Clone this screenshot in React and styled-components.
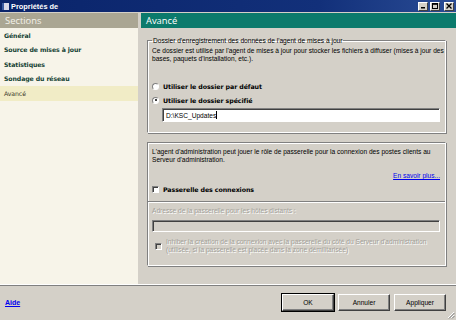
import React from 'react'
import styled, { createGlobalStyle, css } from 'styled-components'

const Colors = {
  FACE: '#d4d0c8',
  SHADOW: '#808080',
  DARK: '#404040',
  TEAL: '#0b7a6c',
  KHAKI: '#aaa693',
  CREAM: '#f7f4e9',
  SELECTED: '#f1ecc6',
  NAV: '#123f33',
  DISABLED: '#a29f98',
  LINK: '#0000ee',
}

const GlobalStyle = createGlobalStyle`
  html, body {
    margin: 0;
    padding: 0;
    background: ${Colors.FACE};
  }
  body {
    font-family: 'Liberation Sans', Arial, sans-serif;
    font-size: 6.6px;
    color: #000;
  }
`

const Window = styled.div`
  width: 456px;
  height: 320px;
  display: flex;
  flex-direction: column;
  background: ${Colors.FACE};
  overflow: hidden;
`

const TitleBar = styled.div`
  height: 12px;
  display: flex;
  align-items: center;
  padding: 0 2px;
  background: linear-gradient(90deg, #0a246a 0%, #12307a 70%, #2a4c95 100%);
  color: #fff;
  font-weight: bold;
  font-size: 7.4px;
  gap: 2px;
`

const TitleIcon = styled.div`
  width: 7px;
  height: 7px;
  background: #d8d8e8;
  border-left: 2px solid #3a5aa0;
  box-sizing: border-box;
`

const TitleText = styled.span`
  flex: 1;
`

const CaptionButton = styled.div`
  width: 10px;
  height: 9px;
  box-sizing: border-box;
  background: ${Colors.FACE};
  border: 1px solid;
  border-color: #fff ${Colors.DARK} ${Colors.DARK} #fff;
  display: flex;
  align-items: center;
  justify-content: center;
  margin-left: ${p => (p.$gap ? '2px' : '0')};
`

const Body = styled.div`
  flex: 1;
  display: flex;
  gap: 3px;
  padding-top: 1px;
  min-height: 0;
  border-bottom: 1px solid #fff;
  box-shadow: 0 1px 0 ${Colors.SHADOW};
`

const Sidebar = styled.div`
  flex: none;
  width: 138px;
  display: flex;
  flex-direction: column;
  background: ${Colors.CREAM};
`

const Header = styled.div`
  height: 15px;
  display: flex;
  align-items: center;
  padding-left: 5px;
  font-family: 'Open Sans', 'Liberation Sans', sans-serif;
  font-size: 9.4px;
  color: #fff;
  background: ${p => (p.$teal ? Colors.TEAL : Colors.KHAKI)};
  ${p =>
    !p.$teal &&
    css`
      color: #f4f2ea;
    `}
`

const NavList = styled.div`
  display: flex;
  flex-direction: column;
  padding-top: 0;
`

const NavItem = styled.div`
  height: 14.5px;
  display: flex;
  align-items: center;
  padding-left: 4px;
  font-family: 'DejaVu Sans', Verdana, sans-serif;
  font-size: 6.2px;
  letter-spacing: -0.1px;
  font-weight: ${p => (p.$active ? 'normal' : 'bold')};
  color: ${p => (p.$active ? '#3a3a2a' : Colors.NAV)};
  background: ${p => (p.$active ? Colors.SELECTED : 'transparent')};
`

const Main = styled.div`
  flex: 1;
  min-width: 0;
  display: flex;
  flex-direction: column;
`

const Content = styled.div`
  flex: 1;
  display: flex;
  flex-direction: column;
  gap: 9px;
  padding: 9px 10px 0 6px;
`

const GroupBox = styled.fieldset`
  margin: 0;
  min-width: 0;
  padding: ${p => p.$pad || '4px 5px 6px 4px'};
  border: 1px solid;
  border-color: ${Colors.SHADOW} #fff #fff ${Colors.SHADOW};
  box-shadow: inset 1px 1px 0 #fff, 1px 1px 0 ${Colors.SHADOW};
  display: flex;
  flex-direction: column;
`

const Legend = styled.legend`
  padding: 0 1px;
  margin-left: 0;
  font-size: 6.6px;
`

const Text = styled.div`
  line-height: 8px;
  white-space: nowrap;
  color: ${p => (p.$disabled ? Colors.DISABLED : '#000')};
  ${p =>
    p.$disabled &&
    css`
      text-shadow: 1px 1px 0 #fff;
    `}
`

const OptionRow = styled.div`
  display: flex;
  align-items: center;
  gap: 4px;
  height: 12px;
  margin-top: ${p => p.$mt || '0'};
  font-family: 'DejaVu Sans', Verdana, sans-serif;
  font-weight: bold;
  font-size: 6.3px;
  letter-spacing: -0.1px;
`

const Radio = styled.span`
  width: 7px;
  height: 7px;
  border-radius: 50%;
  box-sizing: border-box;
  border: 1px solid;
  border-color: ${Colors.SHADOW} #fff #fff ${Colors.SHADOW};
  background: #fff;
  display: flex;
  align-items: center;
  justify-content: center;
  &::after {
    content: '';
    width: 2px;
    height: 2px;
    border-radius: 50%;
    background: ${p => (p.$checked ? '#000' : 'transparent')};
  }
`

const Check = styled.span`
  flex: none;
  width: 7px;
  height: 7px;
  box-sizing: border-box;
  border: 1px solid;
  border-color: ${Colors.SHADOW} #fff #fff ${Colors.SHADOW};
  box-shadow: inset 1px 1px 0 ${Colors.DARK};
  background: ${p => (p.$disabled ? Colors.FACE : '#fff')};
`

const Input = styled.div`
  height: ${p => p.$h || '13px'};
  box-sizing: border-box;
  margin: ${p => p.$m || '0'};
  border: 1px solid;
  border-color: ${Colors.SHADOW} #fff #fff ${Colors.SHADOW};
  box-shadow: inset 1px 1px 0 ${Colors.DARK};
  background: ${p => (p.$disabled ? Colors.FACE : '#fff')};
  display: flex;
  align-items: center;
  padding-left: 3px;
  font-size: 6.6px;
`

const Caret = styled.span`
  width: 1px;
  height: 8px;
  background: #000;
`

const LinkRow = styled.div`
  display: flex;
  justify-content: flex-end;
  margin-top: 8px;
`

const Link = styled.a`
  color: ${Colors.LINK};
  text-decoration: underline;
  font-size: ${p => (p.$small ? '6.6px' : '7px')};
  font-weight: ${p => (p.$bold ? 'bold' : 'normal')};
`

const Separator = styled.div`
  height: 0;
  border-top: 1px solid ${Colors.SHADOW};
  border-bottom: 1px solid #fff;
  margin: 6px -5px 4px -4px;
`

const DisabledCheckRow = styled.div`
  display: flex;
  align-items: center;
  gap: 4px;
  margin-top: 6px;
  padding-left: 3px;
`

const Footer = styled.div`
  height: 35px;
  display: flex;
  align-items: center;
  padding: 0 10px 0 5px;
  position: relative;
`

const Spacer = styled.div`
  flex: 1;
`

const Buttons = styled.div`
  display: flex;
  gap: 4px;
`

const Button = styled.button`
  width: 52px;
  height: 17px;
  padding: 0;
  background: ${Colors.FACE};
  font-family: 'Liberation Sans', Arial, sans-serif;
  font-size: 6.6px;
  color: #000;
  border: 1px solid;
  border-color: #fff ${Colors.DARK} ${Colors.DARK} #fff;
  box-shadow: inset -1px -1px 0 ${Colors.SHADOW};
  ${p =>
    p.$default &&
    css`
      outline: 1px solid #000;
      outline-offset: 0;
    `}
`

const Grip = styled.svg`
  position: absolute;
  right: 1px;
  bottom: 1px;
`

const MinIcon = () => (
  <svg width="6" height="6" viewBox="0 0 6 6">
    <rect x="1" y="4" width="4" height="1.5" fill="#000" />
  </svg>
)

const MaxIcon = () => (
  <svg width="6" height="6" viewBox="0 0 6 6">
    <rect x="0.5" y="0.5" width="5" height="5" fill="none" stroke="#000" strokeWidth="1" />
    <rect x="0.5" y="0.5" width="5" height="1.3" fill="#000" />
  </svg>
)

const CloseIcon = () => (
  <svg width="6" height="6" viewBox="0 0 6 6">
    <path d="M0.5 0.5 L5.5 5.5 M5.5 0.5 L0.5 5.5" stroke="#000" strokeWidth="1.3" />
  </svg>
)

const sections = [
  'Général',
  'Source de mises à jour',
  'Statistiques',
  'Sondage du réseau',
  'Avancé',
]

export default function App() {
  return (
    <>
      <GlobalStyle />
      <Window>
        <TitleBar>
          <TitleIcon />
          <TitleText>Propriétés de</TitleText>
          <CaptionButton><MinIcon /></CaptionButton>
          <CaptionButton><MaxIcon /></CaptionButton>
          <CaptionButton $gap><CloseIcon /></CaptionButton>
        </TitleBar>
        <Body>
          <Sidebar>
            <Header>Sections</Header>
            <NavList>
              {sections.map(s => (
                <NavItem key={s} $active={s === 'Avancé'}>
                  {s}
                </NavItem>
              ))}
            </NavList>
          </Sidebar>
          <Main>
            <Header $teal>Avancé</Header>
            <Content>
              <GroupBox $pad="3px 5px 10px 4px">
                <Legend>Dossier d'enregistrement des données de l'agent de mises à jour</Legend>
                <Text>
                  Ce dossier est utilisé par l'agent de mises à jour pour stocker les fichiers à diffuser (mises à jour des
                  <br />
                  bases, paquets d'installation, etc.).
                </Text>
                <OptionRow $mt="17px">
                  <Radio />
                  Utiliser le dossier par défaut
                </OptionRow>
                <OptionRow $mt="2px">
                  <Radio $checked />
                  Utiliser le dossier spécifié
                </OptionRow>
                <Input $h="14px" $m="2px 0 0 10px">
                  D:\KSC_Updates
                  <Caret />
                </Input>
              </GroupBox>
              <GroupBox $pad="5px 5px 11px 4px">
                <Text>
                  L'agent d'administration peut jouer le rôle de passerelle pour la connexion des postes clients au
                  <br />
                  Serveur d'administration.
                </Text>
                <LinkRow>
                  <Link $small href="#">En savoir plus...</Link>
                </LinkRow>
                <OptionRow $mt="4px">
                  <Check />
                  Passerelle des connexions
                </OptionRow>
                <Separator />
                <Text $disabled>Adresse de la passerelle pour les hôtes distants :</Text>
                <Input $disabled $h="12px" $m="5px 0 0 0" />
                <DisabledCheckRow>
                  <Check $disabled />
                  <Text $disabled>
                    Inhiber la création de la connexion avec la passerelle du côté du Serveur d'administration
                    <br />
                    (utilisée, si la passerelle est placée dans la zone démilitarisée)
                  </Text>
                </DisabledCheckRow>
              </GroupBox>
            </Content>
          </Main>
        </Body>
        <Footer>
          <Link $bold href="#">Aide</Link>
          <Spacer />
          <Buttons>
            <Button $default>OK</Button>
            <Button>Annuler</Button>
            <Button>Appliquer</Button>
          </Buttons>
          <Grip width="8" height="8" viewBox="0 0 8 8">
            <path d="M7 1 L1 7 M7 4 L4 7" stroke="#fff" strokeWidth="1" />
            <path d="M7.5 2 L2 7.5 M7.5 5 L5 7.5" stroke={Colors.SHADOW} strokeWidth="1" />
          </Grip>
        </Footer>
      </Window>
    </>
  )
}
